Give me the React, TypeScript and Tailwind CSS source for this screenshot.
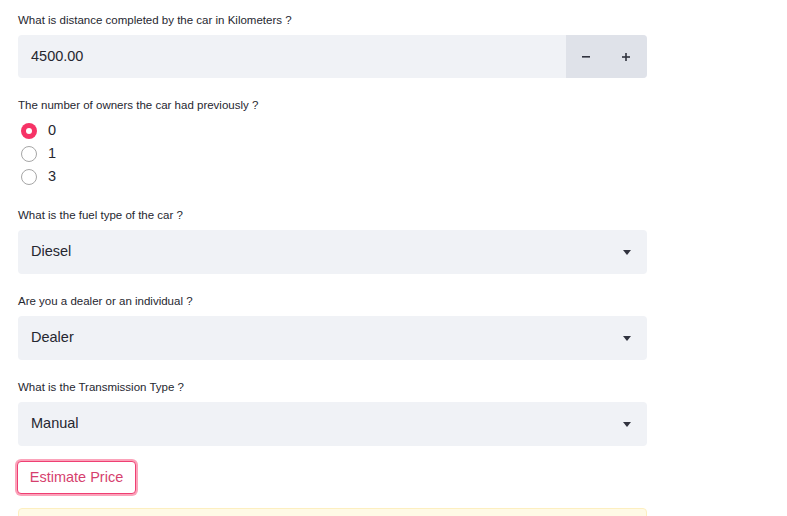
import React from 'react';

const font = { fontFamily: '"Liberation Sans", Arial, sans-serif' };

function Label({ children, className = '' }: { children: React.ReactNode; className?: string }) {
  return (
    <div className={`h-4 pt-px text-[11.5px] leading-4 text-[#262730] ${className}`}>{children}</div>
  );
}

function Caret() {
  return (
    <svg width="8" height="5" viewBox="0 0 8 5" className="mr-[16px]">
      <path d="M0 0 L8 0 L4 5 Z" fill="#31333f" />
    </svg>
  );
}

function SelectBox({ value }: { value: string }) {
  return (
    <div className="flex h-[44px] items-center justify-between rounded-[4px] bg-[#f0f2f6] pl-[13px]">
      <span className="text-[14.5px] text-[#262730]">{value}</span>
      <Caret />
    </div>
  );
}

function Radio({ label, checked }: { label: string; checked?: boolean }) {
  return (
    <div className="flex h-[23px] items-center">
      <div className="ml-[3px] mr-[11px] flex h-4 w-4 items-center justify-center">
        {checked ? (
          <span className="flex h-4 w-4 items-center justify-center rounded-full bg-[#f63366]">
            <span className="h-[6px] w-[6px] rounded-full bg-white" />
          </span>
        ) : (
          <span className="h-4 w-4 rounded-full border-[1.5px] border-[#a6a6a6] bg-white" />
        )}
      </div>
      <span className="text-[14.5px] text-[#262730]">{label}</span>
    </div>
  );
}

export default function App() {
  return (
    <div className="h-[516px] w-[787px] overflow-hidden bg-white" style={font}>
      <div className="ml-[18px] w-[629px] pt-[11px]">
        <Label>What is distance completed by the car in Kilometers ?</Label>
        <div className="mt-[8px] flex h-[43px] overflow-hidden rounded-[4px] bg-[#f0f2f6]">
          <div className="flex flex-1 items-center pl-[13px] text-[14.5px] text-[#262730]">4500.00</div>
          <div className="flex w-[81px] items-center bg-[#dfe2e9] text-[#262730]">
            <span className="flex w-[40px] justify-center">
              <svg width="8" height="2" viewBox="0 0 8 2"><rect width="8" height="1.6" fill="#31333f" /></svg>
            </span>
            <span className="flex w-[40px] justify-center">
              <svg width="8" height="8" viewBox="0 0 8 8">
                <rect y="3.2" width="8" height="1.6" fill="#31333f" />
                <rect x="3.2" width="1.6" height="8" fill="#31333f" />
              </svg>
            </span>
          </div>
        </div>

        <Label className="mt-[18px]">The number of owners the car had previously ?</Label>
        <div className="mt-[7.5px]">
          <Radio label="0" checked />
          <Radio label="1" />
          <Radio label="3" />
        </div>

        <Label className="mt-[17.5px]">What is the fuel type of the car ?</Label>
        <div className="mt-[8px]">
          <SelectBox value="Diesel" />
        </div>

        <Label className="mt-[18px]">Are you a dealer or an individual ?</Label>
        <div className="mt-[8px]">
          <SelectBox value="Dealer" />
        </div>

        <Label className="mt-[18px]">What is the Transmission Type ?</Label>
        <div className="mt-[8px]">
          <SelectBox value="Manual" />
        </div>

        <button className="-ml-[1px] mt-[15px] flex h-[33px] w-[119px] items-center justify-center rounded-[4px] border border-[#ef3f73] bg-white text-[14.5px] text-[#d63f6e] shadow-[0_0_0_2px_rgba(246,51,102,0.45)]">
          Estimate Price
        </button>

        <div className="mt-[14px] h-[40px] rounded-[4px] border border-[#fdefc0] bg-[#fffae6]" />
      </div>
    </div>
  );
}
